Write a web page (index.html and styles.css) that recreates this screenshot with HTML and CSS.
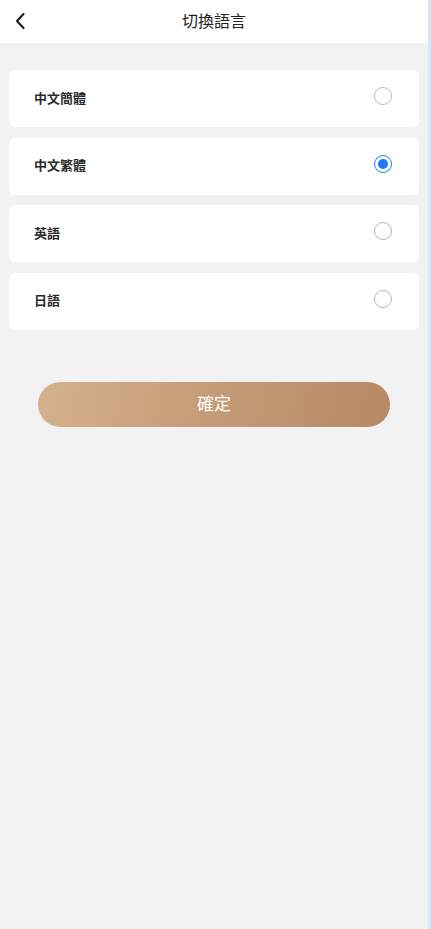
FILE: index.html
```html
<!DOCTYPE html>
<html lang="zh-Hant">
<head>
<meta charset="utf-8">
<link rel="stylesheet" href="styles.css">
</head>
<body>
<div class="page">
  <header class="nav">
    <span class="back">
      <svg width="12" height="18" viewBox="0 0 12 18"><path d="M9.5 2 L3 9 L9.5 16" fill="none" stroke="#1f2233" stroke-width="2.2" stroke-linecap="round" stroke-linejoin="round"/></svg>
    </span>
    <h1 class="title">切換語言</h1>
  </header>
  <main class="list">
    <div class="item"><span class="label">中文簡體</span><span class="radio"></span></div>
    <div class="item"><span class="label">中文繁體</span><span class="radio checked"></span></div>
    <div class="item"><span class="label">英語</span><span class="radio"></span></div>
    <div class="item"><span class="label">日語</span><span class="radio"></span></div>
  </main>
  <div class="actions">
    <button class="confirm">確定</button>
  </div>
</div>
</body>
</html>
```
FILE: styles.css
```css
html, body { margin: 0; padding: 0; }
body {
  background: #f2f2f2;
  font-family: "Noto Sans CJK TC", "Noto Sans CJK SC", "Noto Sans", sans-serif;
}
.page {
  width: 428px;
  min-height: 929px;
  background: #f2f2f2;
  border-right: 3px solid #dfe4ef;
}
.nav {
  height: 43px;
  background: #fff;
  display: flex;
  align-items: center;
  justify-content: center;
  position: relative;
}
.back {
  position: absolute;
  left: 14px;
  top: 12px;
  display: flex;
}
.title {
  margin: 0;
  font-size: 16px;
  font-weight: 400;
  color: #222;
  line-height: 1;
  margin-top: -3px;
}
.list {
  padding: 27px 9px 0 9px;
  display: flex;
  flex-direction: column;
  gap: 10.3px;
}
.item {
  height: 57.3px;
  background: #fff;
  border-radius: 6px;
  display: flex;
  align-items: center;
  justify-content: space-between;
  padding: 0 27px 0 25px;
}
.label {
  font-size: 13px;
  font-weight: 700;
  color: #2a2a2a;
  margin-bottom: 3px;
}
.radio {
  width: 16px;
  height: 16px;
  border: 1px solid #b5b5b5;
  border-radius: 50%;
  box-sizing: content-box;
  margin-bottom: 5px;
  position: relative;
}
.radio.checked {
  border-color: #1a7bff;
}
.radio.checked::after {
  content: "";
  position: absolute;
  left: 3px;
  top: 3px;
  width: 10px;
  height: 10px;
  border-radius: 50%;
  background: #1a7bff;
}
.actions {
  padding: 52px 38px 0 38px;
}
.confirm {
  width: 100%;
  height: 45px;
  border: none;
  border-radius: 23px;
  background: linear-gradient(100deg, #d4b28e 0%, #c69d79 45%, #b78965 100%);
  color: #fff;
  font-family: "Noto Sans CJK TC", "Noto Sans CJK SC", sans-serif;
  font-size: 17px;
  padding: 0 0 4px 0;
  display: block;
}
```
